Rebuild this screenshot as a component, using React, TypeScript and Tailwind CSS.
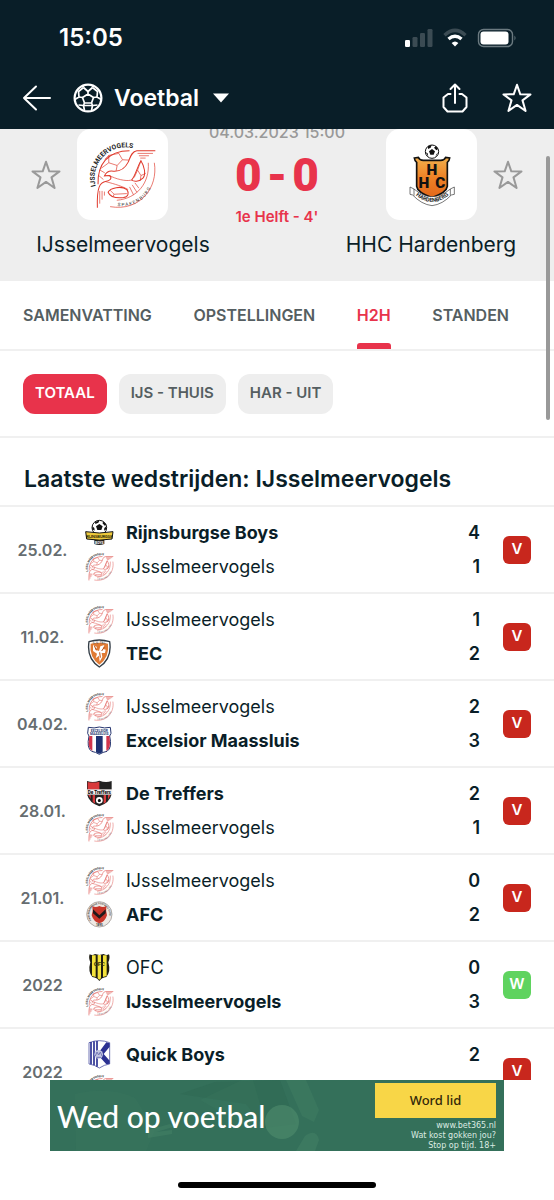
import type { ReactNode } from 'react'
import { clsx } from 'clsx'

type Club = 'ijs' | 'rijnsburg' | 'tec' | 'excelsior' | 'treffers' | 'afc' | 'ofc' | 'quick'

interface Side {
  club: Club
  name: string
  goals: number
}

interface Match {
  date: string
  home: Side
  away: Side
  result: 'V' | 'W'
}

const ijs = (goals: number): Side => ({ club: 'ijs', name: 'IJsselmeervogels', goals })

const matches: Match[] = [
  { date: '25.02.', home: { club: 'rijnsburg', name: 'Rijnsburgse Boys', goals: 4 }, away: ijs(1), result: 'V' },
  { date: '11.02.', home: ijs(1), away: { club: 'tec', name: 'TEC', goals: 2 }, result: 'V' },
  { date: '04.02.', home: ijs(2), away: { club: 'excelsior', name: 'Excelsior Maassluis', goals: 3 }, result: 'V' },
  { date: '28.01.', home: { club: 'treffers', name: 'De Treffers', goals: 2 }, away: ijs(1), result: 'V' },
  { date: '21.01.', home: ijs(0), away: { club: 'afc', name: 'AFC', goals: 2 }, result: 'V' },
  { date: '2022', home: { club: 'ofc', name: 'OFC', goals: 0 }, away: ijs(3), result: 'W' },
  { date: '2022', home: { club: 'quick', name: 'Quick Boys', goals: 2 }, away: ijs(1), result: 'V' },
]

const tabs = ['SAMENVATTING', 'OPSTELLINGEN', 'H2H', 'STANDEN']
const filters = ['TOTAAL', 'IJS - THUIS', 'HAR - UIT']

export default function App() {
  return (
    <div className="relative flex h-screen flex-col overflow-hidden bg-white font-['Inter',sans-serif] text-[#0a1e28]">
      <header className="shrink-0 bg-[#091e28] text-white">
        <StatusBar />
        <NavBar />
      </header>
      <main className="min-h-0 flex-1 overflow-hidden">
        <ScoreBoard />
        <nav className="flex h-[70px] items-stretch justify-between border-b-2 border-[#f0f0f0] pr-[45px] pl-[23px] text-[16px] font-semibold text-[#555e61]">
          {tabs.map(t => (
            <a
              key={t}
              href="#"
              className={clsx('relative flex items-center', t === 'H2H' && 'text-[#e8334b]')}
            >
              {t}
              {t === 'H2H' && <span className="absolute inset-x-0 bottom-0 h-[6px] rounded-t-[3px] bg-[#e8334b]" />}
            </a>
          ))}
        </nav>
        <div className="flex h-[87px] items-center gap-3 border-b-2 border-[#f0f0f0] px-[23px]">
          {filters.map((f, i) => (
            <button
              key={f}
              className={clsx(
                'h-10 rounded-[12px] px-3 text-[15px] font-semibold',
                i === 0 ? 'bg-[#e8334b] text-white' : 'bg-[#eeeeee] text-[#555e61]',
              )}
            >
              {f}
            </button>
          ))}
        </div>
        <h2 className="flex h-[69px] items-center border-b-2 border-[#f0f0f0] px-6 pt-4 text-[23px] font-semibold">
          Laatste wedstrijden: IJsselmeervogels
        </h2>
        {matches.map((m, i) => (
          <MatchRow key={i} match={m} />
        ))}
      </main>
      <footer className="flex h-[120px] shrink-0 flex-col items-center justify-between bg-white pb-[12px]">
        <Banner />
        <div className="h-[6px] w-[198px] rounded-full bg-black" />
      </footer>
      <div className="absolute top-[156px] right-[4px] h-[264px] w-[4px] rounded-full bg-[#999999]" />
    </div>
  )
}

function StatusBar() {
  return (
    <div className="flex h-[68px] items-center justify-between pt-[7px] pr-[37px] pl-[59px]">
      <span className="text-[24px] font-semibold">15:05</span>
      <svg viewBox="0 0 112 20" className="h-[20px] w-[112px]" fill="none">
        <rect x="0" y="12" width="5" height="7" rx="1.2" fill="#fff" />
        <g fill="#3b4b53">
          <rect x="7.500" y="9" width="5" height="10" rx="1.2" />
          <rect x="15" y="5" width="5" height="14" rx="1.2" />
          <rect x="22.500" y="1" width="5" height="18" rx="1.2" />
        </g>
        <path d="M39.500 7.200 Q50 -2.500 60.500 7.200" stroke="#3b4b53" strokeWidth="3.400" />
        <path d="M43.500 11 Q50 5.300 56.500 11" stroke="#fff" strokeWidth="3.400" />
        <path d="M46.600 15 Q50 11.800 53.400 15 L50 18.600 Z" fill="#fff" />
        <rect x="73.500" y="1.500" width="34" height="17" rx="5" stroke="#6b7a80" strokeWidth="1.400" />
        <rect x="75.500" y="3.500" width="28" height="13" rx="3" fill="#fff" />
        <path d="M109.500 7.500 q2 2.500 0 5 z" fill="#6b7a80" />
      </svg>
    </div>
  )
}

function NavBar() {
  return (
    <div className="flex h-[61px] items-center pr-[22px] pb-px pl-[22px]">
      <button aria-label="Terug">
        <svg viewBox="0 0 30 26" className="h-[26px] w-[30px]" fill="none" stroke="#fff" strokeWidth="2" strokeLinecap="round" strokeLinejoin="round">
          <path d="M14 1.500 L2 13 L14 24.500 M2 13 H28" />
        </svg>
      </button>
      <button className="ml-[21px] flex items-center text-[23px] font-semibold">
        <svg viewBox="0 0 30 30" className="mr-[11px] h-[30px] w-[30px]" fill="none" stroke="#fff" strokeWidth="1.700" strokeLinejoin="round">
          <circle cx="15" cy="15" r="13.400" strokeWidth="2.200" />
          <path d="M10.500 4.500 L15 8.500 L19.500 4.500 M15 8.500 V11 M15 11 L20.500 14.500 L18.500 20 H11.500 L9.500 14.500 Z" />
          <path d="M10.500 4.500 L10 2.500 M19.500 4.500 L20 2.500 M10.500 4.500 L5.500 8.500 L6 14 L1.800 16.500 M19.500 4.500 L24.500 8.500 L24 14 L28.200 16.500" />
          <path d="M9.500 14.500 L6 14 M20.500 14.500 L24 14 M11.500 20 L10.500 22.500 L5.500 22 M18.500 20 L19.500 22.500 L24.500 22" />
          <path d="M10.500 22.500 L11.500 27.500 M19.500 22.500 L18.500 27.500 M10.500 22.500 H19.500" />
        </svg>
        Voetbal
        <svg viewBox="0 0 18 10" className="ml-[13px] h-[10px] w-[18px]">
          <path d="M1 .5 H17 L9 9.500 Z" fill="#fff" />
        </svg>
      </button>
      <button aria-label="Delen" className="ml-auto">
        <svg viewBox="0 0 26 30" className="h-[30px] w-[26px]" fill="none" stroke="#fff" strokeWidth="2" strokeLinecap="round" strokeLinejoin="round">
          <path d="M8.500 11 H6 L1.500 14.500 V24 L5.500 28.500 H20.500 L24.500 24 V14.500 L20 11 H17.500" />
          <path d="M13 20 V2 M8.500 6 L13 1.500 L17.500 6" />
        </svg>
      </button>
      <button aria-label="Favoriet" className="ml-[34px]">
        <Star className="size-[30px] text-white" />
      </button>
    </div>
  )
}

function Star({ className }: { className?: string }) {
  return (
    <svg viewBox="0 0 30 30" className={className} fill="none" stroke="currentColor" strokeWidth="2" strokeLinejoin="round">
      <path d="M15 1.800 L18.300 11.300 L28.500 11.400 L20.500 17.400 L23.600 28 L15 21.900 L6.400 28 L9.500 17.400 L1.500 11.400 L11.700 11.300 Z" />
    </svg>
  )
}

function ScoreBoard() {
  return (
    <section className="flex h-[152px] justify-between bg-[#eeeeee] px-[31px]">
      <div className="flex w-[184px] shrink-0 flex-col">
        <div className="flex items-center gap-[16px]">
          <button aria-label="Volg IJsselmeervogels">
            <Star className="size-[30px] text-[#999999]" />
          </button>
          <div className="flex size-[91px] items-center justify-center rounded-[14px] bg-white">
            <IjsCrest className="size-[69px]" />
          </div>
        </div>
        <span className="mt-[10px] text-center text-[21px] leading-[30px]">IJsselmeervogels</span>
      </div>
      <div className="-mt-[7px] flex w-[124px] flex-col items-center whitespace-nowrap">
        <span className="text-[16px] leading-[20px] font-medium text-[#999999]">04.03.2023 15:00</span>
        <div className="mt-[7px] flex items-center gap-[5px] font-['Roboto',sans-serif] text-[46px] leading-[52px] font-black text-[#e8334b]">
          <span>0</span>
          <span>-</span>
          <span>0</span>
        </div>
        <span className="mt-[6px] text-[15px] leading-[20px] font-semibold text-[#e8334b]">1e Helft - 4&apos;</span>
      </div>
      <div className="flex w-[184px] shrink-0 flex-col">
        <div className="flex items-center justify-end gap-[16px]">
          <div className="flex size-[91px] items-center justify-center rounded-[14px] bg-white">
            <HhcCrest />
          </div>
          <button aria-label="Volg HHC Hardenberg">
            <Star className="size-[30px] text-[#999999]" />
          </button>
        </div>
        <span className="mt-[10px] text-center text-[21px] leading-[30px]">HHC Hardenberg</span>
      </div>
    </section>
  )
}

function MatchRow({ match }: { match: Match }) {
  const { date, home, away, result } = match
  return (
    <div className="flex h-[87px] items-center border-b-2 border-[#f0f0f0] pr-[23px]">
      <span className="w-[85px] text-center text-[16px] font-semibold text-[#666d70]">{date}</span>
      <div className="flex-1">
        <TeamLine side={home} winner={home.goals > away.goals} />
        <TeamLine side={away} winner={away.goals > home.goals} />
      </div>
      <span
        className={clsx(
          'ml-[23px] flex size-[28px] items-center justify-center rounded-[6px] text-[15px] font-semibold text-white',
          result === 'V' ? 'bg-[#c8271d]' : 'bg-[#5fd35f]',
        )}
      >
        {result}
      </span>
    </div>
  )
}

function TeamLine({ side, winner }: { side: Side; winner: boolean }) {
  return (
    <div className="flex h-[34px] items-center text-[18px]">
      <Crest club={side.club} />
      <span className={clsx('ml-[12px] flex-1', winner && 'font-bold')}>{side.name}</span>
      <span className="font-semibold">{side.goals}</span>
    </div>
  )
}

function Banner() {
  return (
    <div className="relative flex h-[71px] w-[454px] justify-between overflow-hidden bg-[#34705a] text-white">
      <svg viewBox="0 0 454 71" className="absolute inset-0 h-full w-full" fill="#4d8a6c">
        <path d="M25 14 Q60 6 85 18 L105 50 L96 71 H26 Z" opacity=".1" />
        <path d="M130 14 L165 2 L230 0 L246 44 L215 48 L196 24 Z" fill="#285f4a" opacity=".25" />
        <path d="M150 20 L192 0 H203 L214 38 L196 46 Z" opacity=".12" />
        <path d="M98 50 L120 44 L123 47 L106 52 L122 50 L122 54 L98 58 Z" opacity=".35" />
        <circle cx="232" cy="42" r="17" opacity=".65" />
        <path d="M236 0 H256 L269 30 L264 42 L252 36 L244 18 Z" opacity=".25" />
        <path d="M255 56 Q266 48 269 60 L265 71 H246 Z" opacity=".35" />
      </svg>
      <span className="relative pl-[7px] font-['Lato',sans-serif] text-[30px] leading-[72px] font-medium">Wed op voetbal</span>
      <div className="relative flex flex-col items-end pt-[3px] pr-[8px]">
        <button className="h-[36px] w-[121px] bg-[#f8d647] font-['Noto_Sans',sans-serif] text-[13px] font-medium text-[#33290a]">
          Word lid
        </button>
        <div className="mt-[3px] text-right font-['DejaVu_Sans',sans-serif] text-[8px] leading-[10px] text-[#dcebe2]">
          <a href="#" className="block">www.bet365.nl</a>
          <p>Wat kost gokken jou?</p>
          <p>Stop op tijd. 18+</p>
        </div>
      </div>
    </div>
  )
}

function Crest({ club }: { club: Club }) {
  if (club === 'ijs') return <IjsCrest className="size-[29px]" small />
  return (
    <svg viewBox="0 0 87 87" className="size-[29px]">
      {crests[club]}
    </svg>
  )
}

function IjsCrest({ className, small }: { className?: string; small?: boolean }) {
  // thin lines vanish at badge size, so the small crest gets heavier ones
  const thin = small ? 4 : 2
  return (
    <svg viewBox="268 44 206 206" className={className} fill="none" stroke={small ? '#e4706c' : '#e0392b'} strokeWidth={small ? 5 : 3}>
      <defs>
        <path id="ijs-top" d="M291 182 A92 92 0 0 1 410 71" />
        <path id="ijs-bottom" d="M352 240 A94 94 0 0 0 463 132" />
      </defs>
      <text fill="#222" stroke="none" fontFamily="Roboto, sans-serif" fontWeight="700" fontSize="20">
        <textPath href="#ijs-top">IJSSELMEERVOGELS</textPath>
      </text>
      <text fill="#333" stroke="none" fontFamily="Roboto, sans-serif" fontSize="14">
        <textPath href="#ijs-bottom" startOffset="4">S P A K E N B U R G</textPath>
      </text>
      {/* ball */}
      <path d="M298 176 C296 118 326 76 392 76" />
      <path d="M330 90 L360 84 L371 103 L355 120 L330 112 Z M330 90 L318 102 M330 112 L308 128 M355 120 L352 136 M371 103 L390 104 M304 134 L318 142 M300 150 L314 162" strokeWidth={thin} />
      {/* bird */}
      <path d="M469 76 H414 C398 78 394 96 388 110 C378 130 360 138 344 137 C332 135 322 140 317 151 L332 150 C342 158 334 166 320 168 C304 172 294 182 296 246" />
      <path d="M416 84 H462 M420 91 H450 M424 98 H440 M303 196 V234 M310 196 V222 M317 198 V210" strokeWidth={thin} />
      <path d="M332 150 C350 160 380 168 396 164 M320 168 C350 176 370 182 388 192" strokeWidth={thin} />
      <path d="M426 106 C436 122 442 146 432 158 C420 170 404 168 398 164 C410 150 414 126 426 106 Z" />
      <path d="M426 106 L416 134 L426 150 L440 144 M416 134 L406 156 M426 150 L424 166" strokeWidth={thin} />
      <path d="M328 200 C334 186 368 180 384 192 C392 202 388 214 374 216 C354 218 334 214 328 200 Z" />
      <path d="M334 194 L346 206 L384 204 M346 206 L342 214" strokeWidth={thin} />
      <path d="M392 184 L404 208 M400 178 L414 200 M408 172 L420 188" strokeWidth={thin} />
      {/* rings */}
      <path d="M448 112 C452 172 416 218 354 224" strokeWidth={thin} />
      <path d="M466 112 C478 186 424 258 334 243" strokeWidth={thin} />
    </svg>
  )
}

function HhcCrest() {
  return (
    <svg viewBox="390 52 144 192" className="h-[64px] w-[48px]">
      <defs>
        <linearGradient id="hhc-fill" x1="0" y1="0" x2="0" y2="1">
          <stop offset="0" stopColor="#f3b04c" />
          <stop offset=".5" stopColor="#ee8226" />
          <stop offset="1" stopColor="#e2671a" />
        </linearGradient>
        <path id="hhc-ribbon" d="M406 202 Q462 256 520 202" />
      </defs>
      <circle cx="462" cy="78" r="20" fill="#fff" stroke="#111" strokeWidth="3" />
      <path d="M462 70 L471 77 L467 87 H457 L453 77 Z M450 61 L461 58 L458 66 L450 70 Z M474 61 L480 70 L475 74 L468 66 Z M443 80 L449 83 L451 93 Z M481 80 L475 86 L472 95 Z" fill="#111" />
      <path d="M409 97 L421 95 Q425 104 436 104 H488 Q499 104 503 95 L515 97 Q514 106 508 110 V182 Q506 200 462 216 Q418 200 416 182 V110 Q410 106 409 97 Z" fill="url(#hhc-fill)" stroke="#111" strokeWidth="5" />
      <g fill="#111" fontFamily="Roboto, sans-serif" fontWeight="900" fontSize="46" textAnchor="middle">
        <text x="462" y="149">H</text>
        <text x="438" y="187">H</text>
        <text x="487" y="187">C</text>
      </g>
      <path d="M396 184 L408 190 Q462 236 517 190 L529 184 V206 L520 208 Q494 236 462 240 Q430 236 404 208 L396 206 Z" fill="#fff" stroke="#333" strokeWidth="2" />
      <path d="M408 190 V210 M517 190 V210" stroke="#333" strokeWidth="2" />
      <text fill="#222" fontFamily="Roboto, sans-serif" fontWeight="700" fontSize="17" textAnchor="middle">
        <textPath href="#hhc-ribbon" startOffset="50%">HARDENBERG</textPath>
      </text>
    </svg>
  )
}

// small club badges, all drawn on an 87 x 87 grid
const crests: Record<Exclude<Club, 'ijs'>, ReactNode> = {
  rijnsburg: (
    <>
      <circle cx="43" cy="29" r="22" fill="#fff" stroke="#111" strokeWidth="3" />
      <path d="M43 18 L53 25 L49 36 H37 L33 25 Z M30 11 L43 8 L40 14 L31 18 Z M56 11 L64 20 L59 23 L52 15 Z M22 25 L28 30 L29 38 L22 34 Z M64 25 L58 30 L57 38 L64 34 Z" fill="#111" />
      <path d="M28 62 H58 V78 Q43 84 28 78 Z" fill="#222" />
      <path d="M2 41 Q43 49 84 41 L81 63 Q43 70 5 63 Z" fill="#edc93b" stroke="#111" strokeWidth="3" />
      <text x="43" y="60" textAnchor="middle" fontFamily="Roboto, sans-serif" fontWeight="500" fontSize="12">RIJNSBURGSE</text>
      <text x="43" y="78" textAnchor="middle" fill="#fff" fontFamily="Roboto, sans-serif" fontWeight="700" fontSize="10">BOYS</text>
    </>
  ),
  tec: (
    <>
      <path d="M12 8 Q43 -2 74 8 Q82 58 43 84 Q4 58 12 8 Z" fill="#fff" stroke="#333d46" strokeWidth="4" />
      <path d="M17 14 Q43 8 69 14 Q74 54 43 77 Q12 54 17 14 Z" fill="#e07b35" />
      <path d="M24 18 L36 24 L32 32 L42 36 L46 22 L58 18 L54 30 L62 32 L60 42 L50 42 L52 54 L44 68 L42 50 L32 58 L36 44 L24 36 Z" fill="#fff" />
      <path d="M28 20 L34 34 M58 24 L50 36 M44 40 L46 56" stroke="#b24d16" strokeWidth="3" />
      <text x="43" y="14" textAnchor="middle" fill="#555" fontFamily="Roboto, sans-serif" fontSize="11">S.V. TEC</text>
    </>
  ),
  excelsior: (
    <>
      <path d="M10 4 Q28 8 43 3 Q58 8 76 4 L78 22 L74 30 Q82 66 66 76 Q54 78 43 85 Q32 78 20 76 Q4 66 12 30 L8 22 Z" fill="#fff" stroke="#26356f" strokeWidth="3" />
      <path d="M13 30 H22 V75 Q6 68 13 30 Z M64 30 H73 Q80 68 64 75 Z" fill="#d2364d" />
      <path d="M33 30 H53 V79 L43 83 L33 79 Z" fill="#1f3272" />
      <g textAnchor="middle" fill="#26356f" fontFamily="Roboto, sans-serif" fontWeight="700" fontSize="10">
        <text x="43" y="17">EXCELSIOR</text>
        <text x="43" y="26">MAASSLUIS</text>
      </g>
    </>
  ),
  treffers: (
    <>
      <path d="M6 6 Q24 12 43 5 Q62 12 80 6 V46 Q74 72 43 82 Q12 72 6 46 Z" fill="#222" />
      <path d="M8 9 Q26 13 43 8 V32 H8 Z M10 48 H17 V60 Z M23 48 H30 V74 L23 68 Z M56 48 H63 V70 L56 74 Z M69 48 H76 L69 62 Z" fill="#d83a3c" />
      <path d="M4 31 H82 V47 H4 Z" fill="#f6f1f1" />
      <text x="43" y="44" textAnchor="middle" fontFamily="Roboto, sans-serif" fontWeight="700" fontSize="14">De Treffers</text>
      <circle cx="43" cy="64" r="10" fill="#fff" />
      <path d="M43 59 L48 63 L46 69 H40 L38 63 Z" fill="#111" />
    </>
  ),
  afc: (
    <>
      <defs>
        <path id="afc-ring" d="M19 61 A30 30 0 1 1 67 61" />
      </defs>
      <circle cx="43" cy="43" r="38" fill="#eee9e4" stroke="#8f8783" strokeWidth="2" />
      <text fill="#333" fontFamily="Roboto, sans-serif" fontWeight="700" fontSize="7">
        <textPath href="#afc-ring">AMSTERDAMSCHE FOOTBALL CLUB</textPath>
      </text>
      <path d="M22 18 Q32 24 43 18 Q54 24 64 18 Q62 34 66 46 Q60 66 43 70 Q26 66 20 46 Q25 34 22 18 Z" fill="#c9362a" />
      <path d="M24 28 L43 46 L62 28 V40 L43 56 L24 40 Z" fill="#1f1b1b" />
      <text x="43" y="79" textAnchor="middle" fill="#333" fontFamily="Roboto, sans-serif" fontWeight="700" fontSize="9">1895</text>
    </>
  ),
  ofc: (
    <>
      <path d="M14 4 Q22 8 30 3 L43 6 L56 3 Q64 8 72 4 Q76 14 70 28 Q78 56 64 72 Q50 74 43 84 Q36 74 22 72 Q8 56 16 28 Q10 14 14 4 Z" fill="#1d1c12" />
      <path d="M21 7 H32 V72 L21 69 Z M38 6 H48 V76 L43 80 L38 76 Z M54 7 H65 V69 L54 72 Z" fill="#f3e23b" />
      <text x="43" y="38" textAnchor="middle" fill="#3b360a" fontFamily="Roboto, sans-serif" fontWeight="700" fontSize="18">OFC</text>
    </>
  ),
  quick: (
    <>
      <path d="M12 8 Q43 -4 74 8 V72 Q58 74 43 84 Q28 74 12 72 Z" fill="#fff" stroke="#2b3192" strokeWidth="2" />
      <path d="M18 6 V73 M27 4 V76 M36 3 V80" stroke="#2b3192" strokeWidth="5" />
      <path d="M44 34 L64 7 L74 10 V20 L56 42 L74 62 V71 L64 73 L44 50 Z" fill="#2b3192" />
      <circle cx="41" cy="43" r="13" fill="#c3c6e2" />
      <path d="M31 48 L36 36 L41 45 L46 36 L51 48 M34 52 H48" stroke="#7479b8" strokeWidth="3" fill="none" />
    </>
  ),
}
